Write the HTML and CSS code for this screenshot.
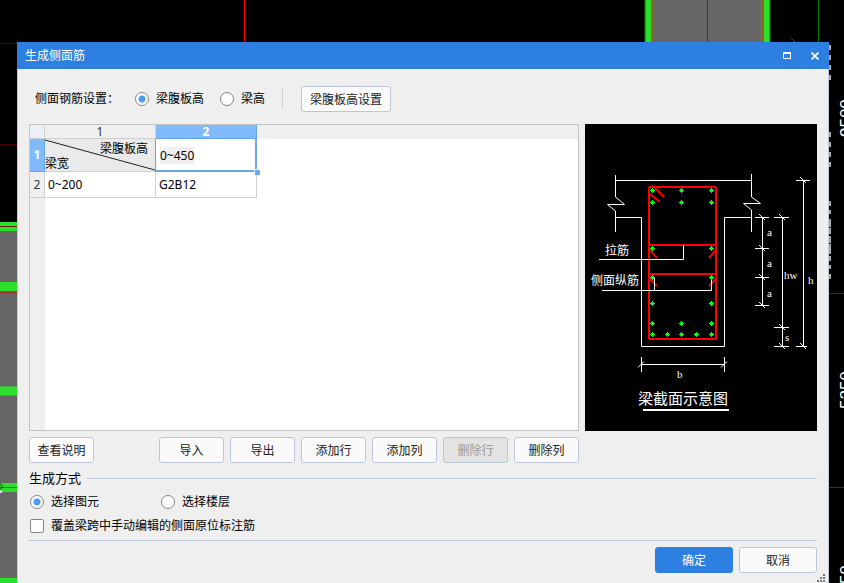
FILE: index.html
```html
<!DOCTYPE html>
<html lang="zh-CN">
<head>
<meta charset="utf-8">
<title>生成侧面筋</title>
<link rel="stylesheet" href="styles.css">
</head>
<body>
<svg class="cad" viewBox="0 0 844 583" preserveAspectRatio="xMidYMin slice" aria-hidden="true">
  <path d="M244.5 0V42" stroke="#f00"/>
  <path d="M0 43.5H17" stroke="#5c0000"/>
  <path d="M0 145H17" stroke="#480000" stroke-width="2"/>
  <rect x="645" y="0" width="125" height="42" fill="#666"/>
  <path d="M648.5 0V42M767 0V42" stroke="#2bdf2b" stroke-width="6"/>
  <path d="M645 0V42M770 0V42" stroke="#1c841c"/>
  <path d="M652 0V42M762.500 0V42" stroke="#8f6a24" stroke-width="2"/>
  <path d="M707.500 0V42" stroke="#8b1b1b"/>
  <path d="M818.500 0V42M791 38l4 4" stroke="#008000" fill="none"/>
  <rect x="0" y="222" width="17" height="361" fill="#666"/>
  <path d="M0 226.500H17M0 286.500H17M0 391H17M0 487.500H17M0 582.500H17" stroke="#2bdf2b" stroke-width="9"/>
  <path d="M0 226.500H17" stroke="#651800"/>
  <path d="M0 487.500H17" stroke="#8e4a12"/>
  <path d="M0 292.500H17" stroke="#a93131" stroke-width="2"/>
  <path d="M0 483l2 3-2 5" stroke="#155c15" fill="none"/>
  <path d="M0 490h2v3h-2z" fill="#ddd"/>
  <path d="M829 293.500H844M829 487.500H844" stroke="#005500"/>
  <g class="cad-text">
    <text transform="translate(852 137) rotate(-90)">9500</text>
    <text transform="translate(852 409) rotate(-90)">5250</text>
    <text transform="translate(852 603) rotate(-90)">5250</text>
  </g>
  <g stroke="#aaa" stroke-width="2" fill="none">
    <path d="M830 45V81" stroke-dasharray="5 5"/>
    <path d="M830 132V168" stroke-dasharray="5 5"/>
    <path d="M830 201V279" stroke-dasharray="5 4 4 5 8 1 6 2 7 1 10 2"/>
  </g>
</svg>

<main class="dialog">
  <header class="titlebar">
    <h1>生成侧面筋</h1>
    <div class="window-buttons">
      <button type="button" aria-label="最大化"><svg width="8" height="7" viewBox="0 0 8 7"><path d="M.5 1V6.500H7.500V1M0 1H8" fill="none" stroke="#fff"/><path d="M0 1H8" stroke="#fff" stroke-width="2"/></svg></button>
      <button type="button" aria-label="关闭"><svg width="8" height="8" viewBox="0 0 8 8"><path d="M.5.5l7 7M7.500.5l-7 7" stroke="#fff" stroke-width="1.800"/></svg></button>
    </div>
  </header>

  <div class="content">
    <div class="settings">
      <span class="settings-title" id="setting">侧面钢筋设置：</span>
      <div class="options" role="radiogroup" aria-labelledby="setting">
        <label><input type="radio" name="height" checked>梁腹板高</label>
        <label><input type="radio" name="height">梁高</label>
      </div>
      <span class="divider"></span>
      <button type="button" class="btn btn-setting">梁腹板高设置</button>
    </div>

    <div class="workspace">
      <div class="sheet">
        <table>
          <colgroup><col class="col-index"><col class="col-one"><col class="col-two"></colgroup>
          <thead>
            <tr><td class="corner"></td><th scope="col">1</th><th scope="col" class="active">2</th></tr>
          </thead>
          <tbody>
            <tr class="row-head">
              <th scope="row" class="active">1</th>
              <td class="axes">
                <svg viewBox="0 0 110 32" preserveAspectRatio="none" aria-hidden="true"><path d="M0 1L110 31" stroke="#222"/></svg>
                <span class="axis-height">梁腹板高</span>
                <span class="axis-width">梁宽</span>
              </td>
              <td class="selected"><span>0~450</span></td>
            </tr>
            <tr class="row-data"><th scope="row">2</th><td class="width-range">0~200</td><td>G2B12</td></tr>
          </tbody>
        </table>
      </div>

      <svg class="section" viewBox="585 124 232 307" role="img" aria-label="梁截面示意图">
        <rect x="585" y="124" width="232" height="307"/>
        <g fill="none" stroke="#fff">
          <path d="M615.500 175V197L624.500 204.500H607.500L615.500 211V232"/>
          <path d="M751.500 174V197L760.500 203.500H743.500L751.500 210V232"/>
          <path d="M615 180.500H751M615 217.500H641.500V346.500H724.500V217.500H751"/>
        </g>
        <g fill="none" stroke="#f00" stroke-width="2">
          <rect x="649" y="187" width="67" height="152" rx="1"/>
          <path d="M649 245H716M649 274H716"/>
          <path d="M655 188L664 197M650 194L660 202M650 250L657 258M716 250L709 258M650 279L657 286M716 279L709 286"/>
        </g>
        <path fill="none" stroke="#fff" d="M599 259.500H683.500V245M602 290.500H711.500V280M654.500 278V290"/>
        <defs><path id="bar" fill="#0f0" d="M0-2H1V-1H2V0H3V1H2V2H1V3H0V2H-1V1H-2V0H-1V-1H0z"/></defs>
        <g class="bars">
          <use href="#bar" x="652" y="190"/><use href="#bar" x="681" y="190"/><use href="#bar" x="711" y="190"/>
          <use href="#bar" x="652" y="202"/><use href="#bar" x="681" y="202"/><use href="#bar" x="711" y="202"/>
          <use href="#bar" x="652" y="248"/><use href="#bar" x="711" y="248"/>
          <use href="#bar" x="652" y="277"/><use href="#bar" x="711" y="277"/>
          <use href="#bar" x="652" y="303"/><use href="#bar" x="711" y="303"/>
          <use href="#bar" x="652" y="323"/><use href="#bar" x="681" y="323"/><use href="#bar" x="711" y="323"/>
          <use href="#bar" x="652" y="334"/><use href="#bar" x="667" y="334"/><use href="#bar" x="681" y="334"/><use href="#bar" x="696" y="334"/><use href="#bar" x="711" y="334"/>
        </g>
        <g fill="none" stroke="#fff">
          <path d="M762.500 217V305M755 217.500H769M755 248.500H769M755 277.500H769M755 305.500H769"/>
          <path d="M782.500 217V346M774 217.500H789M774 327.500H789M774 346.500H789"/>
          <path d="M803.500 180V346M796 180.500H810M796 346.500H807"/>
          <path d="M641 364.500H725M641.500 357V372M724.500 357V372M638 367.500l6-6M721 367.500l6-6"/>
          <path d="M759 214l6 6M759 245l6 6M759 274l6 6M759 302l6 6M779 214l6 6M779 324l6 6M779 343l6 6M800 177l6 6M800 343l6 6"/>
        </g>
        <path d="M643 410H729" stroke="#fff" stroke-width="2"/>
        <g class="note">
          <text x="605" y="255">拉筋</text>
          <text x="591" y="285">侧面纵筋</text>
        </g>
        <g class="dimension">
          <text x="767" y="236">a</text><text x="767" y="267">a</text><text x="767" y="297">a</text>
          <text x="784" y="279">hw</text><text x="808" y="284">h</text>
          <text x="785" y="341">s</text><text x="677" y="378">b</text>
        </g>
        <text class="caption" x="638" y="404">梁截面示意图</text>
      </svg>
    </div>

    <div class="actions">
      <button type="button" class="btn btn-help">查看说明</button>
      <button type="button" class="btn">导入</button>
      <button type="button" class="btn">导出</button>
      <button type="button" class="btn">添加行</button>
      <button type="button" class="btn">添加列</button>
      <button type="button" class="btn" disabled>删除行</button>
      <button type="button" class="btn">删除列</button>
    </div>

    <section class="method">
      <h2>生成方式</h2>
      <div class="choices">
        <label><input type="radio" name="method" checked>选择图元</label>
        <label><input type="radio" name="method">选择楼层</label>
      </div>
      <label><input type="checkbox">覆盖梁跨中手动编辑的侧面原位标注筋</label>
    </section>

    <footer class="footer">
      <button type="button" class="btn btn-primary">确定</button>
      <button type="button" class="btn">取消</button>
    </footer>
  </div>
  <svg class="grip" width="8" height="8" viewBox="0 0 8 8" aria-hidden="true"><path fill="#777" d="M6 0h2v2H6zM3 3h2v2H3zM6 3h2v2H6zM0 6h2v2H0zM3 6h2v2H3zM6 6h2v2H6z"/></svg>
</main>
</body>
</html>
```
FILE: styles.css
```css
* { box-sizing: border-box; }

body {
  margin: 0;
  min-height: 100vh;
  display: flex;
  overflow: hidden;
  background: #000;
  color: #000;
  font: 12px/16px "Noto Sans", "Noto Sans CJK SC", sans-serif;
}

button, input { font: inherit; margin: 0; }

.cad {
  position: absolute;
  inset: 0;
  width: 100%;
  height: 100%;
}
.cad-text { fill: #fff; font: 17px "Liberation Sans", sans-serif; }

.dialog {
  position: relative;
  flex: 1;
  display: flex;
  flex-direction: column;
  margin: 42px 15px 0 17px;
  background: #efefef;
}

.titlebar {
  display: flex;
  align-items: center;
  justify-content: space-between;
  height: 27px;
  padding: 0 10px 0 8px;
  background: #2d80e1;
  color: #fff;
}
.titlebar h1 { margin: 0; font-size: 12px; font-weight: 400; }
.window-buttons { display: flex; gap: 20px; }
.window-buttons button {
  display: flex;
  padding: 0;
  border: 0;
  background: none;
}

.content {
  flex: 1;
  padding: 17px 11px 0;
  border: solid #c0c8d8;
  border-width: 0 1px;
}

label { display: flex; align-items: center; gap: 7px; }

input[type="radio"], input[type="checkbox"] {
  appearance: none;
  width: 14px;
  height: 14px;
  border: 1px solid #858585;
  background: #fff;
}
input[type="radio"] { border-radius: 50%; }
input[type="radio"]:checked { background: radial-gradient(circle, #4a9bf5 3px, #fff 4px); }
input[type="checkbox"] { border-radius: 2px; }

.btn {
  width: 65px;
  height: 26px;
  padding: 1px 0 0;
  border: 1px solid #bdc6d9;
  border-radius: 3px;
  background: #fafafa;
  color: #222;
}
.btn:disabled { background: #e3e3e3; color: #999; }

.settings {
  display: flex;
  align-items: center;
  height: 26px;
  padding-left: 6px;
}
.settings-title { width: 100px; }
.options { display: flex; gap: 16px; }
.divider {
  width: 1px;
  height: 20px;
  margin: 0 18px 0 17px;
  background: #cfcfcf;
}
.btn-setting { width: 90px; }

.workspace {
  display: flex;
  gap: 6px;
  margin-top: 12px;
}
.sheet {
  flex: 1;
  border: 1px solid #c3c3c3;
  background:
    linear-gradient(#efefef, #efefef) 0 0 / 100% 14px no-repeat,
    linear-gradient(#efefef, #efefef) 0 0 / 15px 100% no-repeat,
    #fff;
}
.section { width: 232px; height: 307px; }
.bars { shape-rendering: crispEdges; }

table {
  width: 227px;
  table-layout: fixed;
  border-spacing: 0;
}
.col-index { width: 15px; }
.col-one { width: 111px; }
.col-two { width: 101px; }
th, td {
  padding: 0;
  border: solid #d0d0d0;
  border-width: 0 1px 1px 0;
  text-align: left;
}
th { color: #333; font-weight: 400; text-align: center; }
thead tr { height: 14px; line-height: 13px; }
.corner { background: #eaf0f6; }
th.active {
  border-color: #66a5e8;
  background: #80bafb;
  color: #fff;
  font-weight: 700;
}
.row-head { height: 33px; }
.row-data { height: 26px; }
.row-data td { padding-left: 3px; }
.axes {
  position: relative;
  padding-top: 2px;
  background: #eaeaea;
  line-height: 15px;
}
.axes svg { position: absolute; inset: 0; width: 100%; height: 100%; }
.axes span { display: block; position: relative; }
.axis-height { padding-right: 7px; text-align: right; }
.selected {
  position: relative;
  padding-left: 4px;
  border: 0;
}
.selected span { background: #efefef; }
.selected::before {
  content: "";
  position: absolute;
  inset: 0 0 0 -1px;
  border: solid #67a7ea;
  border-width: 0 2px 2px 1px;
}
.selected::after {
  content: "";
  position: absolute;
  right: -3px;
  bottom: -3px;
  width: 5px;
  height: 5px;
  border: solid #fff;
  border-width: 1px 0 0 1px;
  background: #67a7ea;
}

.note { fill: #fff; font-size: 12px; }
.dimension { fill: #fff; font: 11px "Liberation Serif", serif; }
.caption { fill: #fff; font-size: 15px; }

.actions { display: flex; gap: 6px; margin-top: 6px; }
.btn-help { margin-right: 59px; }

.method {
  padding: 7px 0 6px;
  border-bottom: 1px solid #bdc6d9;
}
.method h2 {
  display: flex;
  align-items: center;
  gap: 6px;
  margin: 0 0 8px;
  font-size: 13px;
  font-weight: 400;
}
.method h2::after {
  content: "";
  flex: 1;
  height: 1px;
  background: #bdc6d9;
}
.method label { padding-left: 1px; }
.choices { display: flex; margin-bottom: 8px; }
.choices label { width: 131px; }

.footer {
  display: flex;
  justify-content: flex-end;
  gap: 6px;
  padding: 6px 0 10px;
}
.footer .btn { width: 78px; }
.footer .btn-primary {
  border-color: #2d80e1;
  background: #2d80e1;
  color: #fff;
}

.grip { position: absolute; right: 4px; bottom: 1px; }
```
